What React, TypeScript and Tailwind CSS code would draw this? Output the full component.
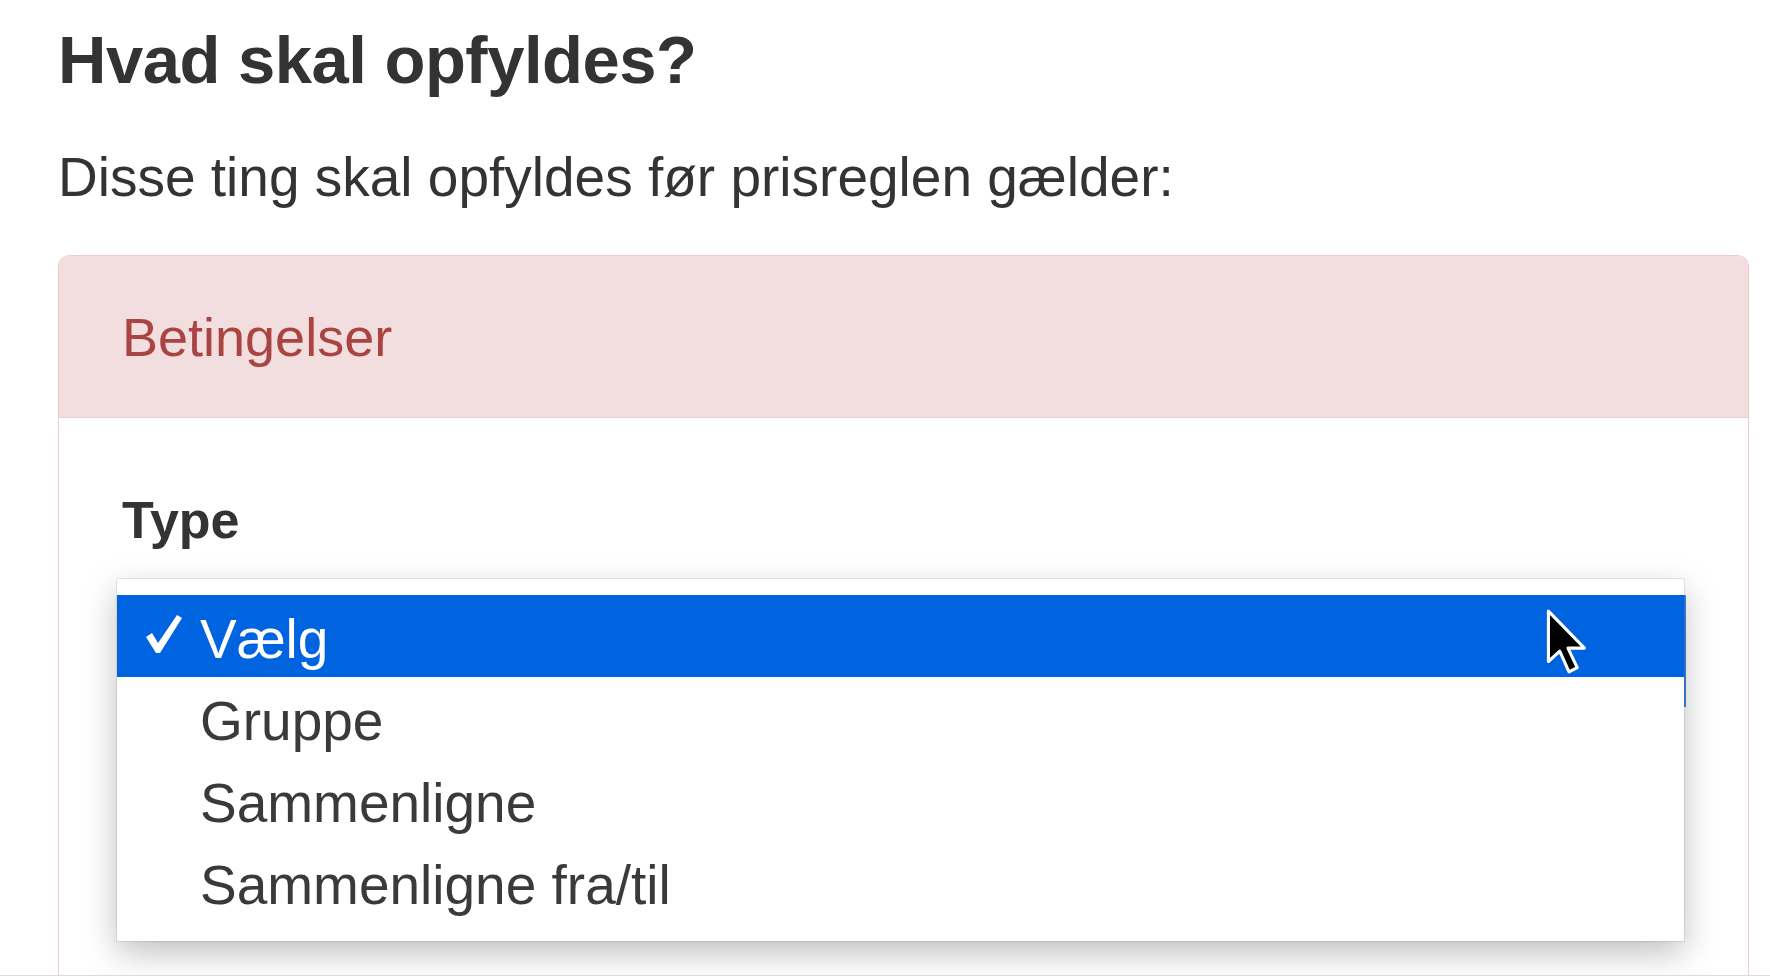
const options = ["Gruppe", "Sammenligne", "Sammenligne fra/til"];

function Cursor() {
  return (
    <svg
      className="absolute left-[1545px] top-[608px] h-[72px] w-[48px]"
      viewBox="0 0 46 70"
      fill="none"
    >
      <path
        d="M3 3 L3 52 L14 42 L23 62 L31 58 L22 39 L38 39 Z"
        fill="#000"
        stroke="#fff"
        strokeWidth="3"
        strokeLinejoin="round"
      />
    </svg>
  );
}

function Check() {
  return (
    <svg className="ml-[28px] mt-[15px] h-[40px] w-[38px]" viewBox="0 0 38 40" fill="#fff">
      <path d="M1 23 L7 19 L13 29 L32 1 L37 4 L15 39 L11 39 Z" />
    </svg>
  );
}

export default function App() {
  return (
    <div className="relative h-[976px] w-[1770px] overflow-hidden border-b border-[#dcdcdc] bg-white font-['Liberation_Sans',Arial,sans-serif] text-[#333]">
      <div className="pl-[58px] pr-[21px] pt-[24px]">
        <h1 className="text-[67px] font-bold leading-[72px] tracking-[-0.5px] text-[#333]">Hvad skal opfyldes?</h1>
        <p className="mt-[50px] text-[55px] leading-[62px] text-[#333]">Disse ting skal opfyldes før prisreglen gælder:</p>

        <div className="mt-[47px] rounded-t-[12px] border border-b-0 border-[#ebccd1]">
          <div className="flex h-[162px] items-center rounded-t-[11px] border-b border-[#ebccd1] bg-[#f2dede] pl-[63px]">
            <span className="text-[54px] leading-[62px] text-[#a94442]">Betingelser</span>
          </div>

          <div className="h-[600px] bg-white pl-[63px] pr-[64px] pt-[72px]">
            <label className="block text-[52px] font-bold leading-[60px] text-[#333]">Type</label>

            <div className="relative -ml-[5px] mt-[29px] w-[1567px]">
              <div className="absolute right-[-2px] top-[16px] h-[112px] w-[4px] bg-[#3d86e8]" />
              <div className="relative bg-white pb-[18px] pt-[16px] shadow-[0_12px_32px_rgba(0,0,0,0.25),0_0_0_1px_rgba(0,0,0,0.08)]">
                <div className="flex h-[82px] items-start bg-[#0063e0] pt-[4px] text-white">
                  <div className="w-[83px]">
                    <Check />
                  </div>
                  <span className="text-[55px] leading-[80px]">Vælg</span>
                </div>
                {options.map((option) => (
                  <div key={option} className="h-[82px] pl-[83px] pt-[4px] text-[55px] leading-[80px] text-[#3a3a3a]">
                    {option}
                  </div>
                ))}
              </div>
            </div>
          </div>
        </div>
      </div>
      <Cursor />
    </div>
  );
}
